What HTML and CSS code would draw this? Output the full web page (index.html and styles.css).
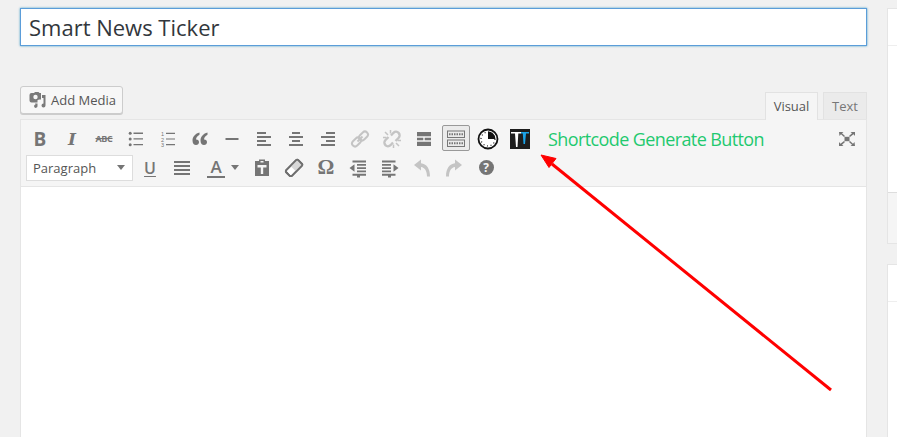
FILE: index.html
```html
<!DOCTYPE html>
<html lang="en">
<head>
    <meta charset="UTF-8">
    <meta name="viewport" content="width=device-width, initial-scale=1.0">
    <title>Edit Ticker</title>
    <link rel="stylesheet" href="styles.css">
</head>
<body>
    <div class="page">
        <div class="main">
            <input class="title-input" type="text" value="Smart News Ticker">

            <div class="editor-head">
                <button class="add-media">
                    <svg class="media-icon" viewBox="0 0 18 16"><path d="M2.500 1H5l1-1h3.500l1 1H12v6.500h-1.500a3 3 0 0 0-2 .8V10.500H2.500a2 2 0 0 1-2-2V3a2 2 0 0 1 2-2z"/><circle cx="6.500" cy="5" r="2.200" fill="#f7f7f7"/><path d="M13 3h3.500v10.500a2 2 0 1 1-2-2V6H13zM6 11.500h2.500v2.500a1.700 1.700 0 1 1-2-1.500z"/></svg>
                    Add Media
                </button>
                <div class="tabs">
                    <span class="tab tab-active">Visual</span>
                    <span class="tab">Text</span>
                </div>
            </div>

            <div class="editor">
                <div class="toolbar">
                    <div class="row">
                        <span class="tool glyph-b">B</span>
                        <span class="tool glyph-i">I</span>
                        <span class="tool glyph-abc">ABC</span>
                        <span class="tool"><svg viewBox="0 0 20 20"><circle cx="4.200" cy="4.300" r="1.500"/><circle cx="4.200" cy="10" r="1.500"/><circle cx="4.200" cy="15.700" r="1.500"/><path d="M7.500 3.600h9.500v1.300H7.500zM7.500 9.300h9.500v1.300H7.500zM7.500 15h9.500v1.300H7.500z"/></svg></span>
                        <span class="tool"><svg viewBox="0 0 20 20"><text x="3" y="7" class="tiny-num">1</text><text x="3" y="12.500" class="tiny-num">2</text><text x="3" y="17.500" class="tiny-num">3</text><path d="M8 3.800h9v1.200H8zM8 9.400h9v1.200H8zM8 15h9v1.200H8z"/></svg></span>
                        <span class="tool"><svg viewBox="0 0 20 20"><path d="M9.500 3.500C5.500 4.500 2.500 7.500 2.500 11.500c0 3 1.500 4.500 3.500 4.500 1.800 0 3-1.200 3-2.800 0-1.700-1.200-2.800-3-2.700.2-2 1.500-3.800 3.500-4.800zM17.500 3.500c-4 1-7 4-7 8 0 3 1.500 4.500 3.500 4.500 1.800 0 3-1.200 3-2.800 0-1.700-1.200-2.800-3-2.700.2-2 1.500-3.800 3.500-4.800z"/></svg></span>
                        <span class="tool"><svg viewBox="0 0 20 20"><path d="M3.500 9h13v2h-13z"/></svg></span>
                        <span class="tool"><svg viewBox="0 0 20 20"><path d="M12 5V3H3v2h9zm5 4V7H3v2h14zm-5 4v-2H3v2h9zm5 4v-2H3v2h14z"/></svg></span>
                        <span class="tool"><svg viewBox="0 0 20 20"><path d="M14 5V3H6v2h8zm3 4V7H3v2h14zm-3 4v-2H6v2h8zm3 4v-2H3v2h14z"/></svg></span>
                        <span class="tool"><svg viewBox="0 0 20 20"><path d="M17 5V3H8v2h9zm0 4V7H3v2h14zm0 4v-2H8v2h9zm0 4v-2H3v2h14z"/></svg></span>
                        <span class="tool tool-off"><svg viewBox="0 0 20 20"><g class="chain"><rect x="1.500" y="10" width="10" height="6" rx="3" transform="rotate(-45 6.500 13)"/><rect x="8.500" y="4" width="10" height="6" rx="3" transform="rotate(-45 13.500 7)"/><path d="M7.500 12.500l5-5"/></g></svg></span>
                        <span class="tool tool-off"><svg viewBox="0 0 20 20"><g class="chain chain-thick"><path d="M6.500 8l-3 3a3.400 3.400 0 0 0 5 5.200l2.500-2.700M13.500 12l3-3a3.400 3.400 0 0 0-5-5.200L9 6.500"/><path d="M3 3l3 3M17 17l-3-3M8.500 1v3.500M11.500 15.500V19M1 8.500h3.500M15.500 11.500H19" stroke-width="1.500"/></g></svg></span>
                        <span class="tool"><svg viewBox="0 0 20 20"><path d="M3 3h14v4.300H3zM3 8.800h6.300v2.400H3zM10.700 8.800H17v2.400h-6.300zM3 12.700h14V17H3z"/></svg></span>
                        <span class="tool tool-active"><svg viewBox="0 0 20 20"><g class="keys"><rect x="1.500" y="2" width="17" height="6.500"/><rect x="1.500" y="11" width="17" height="6.500"/><path d="M3 5.200h14M3 14.200h14" stroke-dasharray="1.500 1" stroke-width="2"/></g></svg></span>
                        <span class="tool"><svg class="clock" viewBox="0 0 22 22"><circle cx="11" cy="11" r="9.500"/><path class="pie" d="M11 11V3.500A7.500 7.500 0 0 1 18.500 11z"/><circle class="ticks" cx="11" cy="11" r="7"/></svg></span>
                        <span class="tool"><svg class="logo" viewBox="0 0 20 20"><path fill="#1d1d1d" d="M0 0h20v20H0z"/><path fill="#fff" d="M1 3h10v1.500H8.300L7.500 18H6L5 4.500H1z"/><path fill="#1ca3e8" d="M11 3h8v1.500h-3L15 15h-1.500l-.7-10.500H11z"/></svg></span>
                        <span class="note">Shortcode Generate Button</span>
                        <span class="tool tool-end"><svg viewBox="0 0 20 20"><path d="M7.500 7.800h5v4.400h-5z"/><path d="M2 3h4.500L5 4.300 8 7 7 8 4 5.300 2.500 7zM18 3v4l-1.500-1.700L13 8l-1-1 3-2.700L13.500 3zM2 17v-4l1.500 1.700L7 12l1 1-3 2.700L6.500 17zM18 17h-4.500l1.500-1.300L12 13l1-1 3 2.700 1.500-1.700z"/></svg></span>
                    </div>
                    <div class="row">
                        <div class="format-select">Paragraph<i class="caret"></i></div>
                        <span class="tool glyph-u">U</span>
                        <span class="tool"><svg viewBox="0 0 20 20"><path d="M2 3h16v2H2zM2 7h16v2H2zM2 11h16v2H2zM2 15h16v2H2z"/></svg></span>
                        <span class="tool tool-color"><span class="glyph-a">A</span><i class="caret"></i></span>
                        <span class="tool"><svg viewBox="0 0 20 20"><path fill-rule="evenodd" d="M7 3V1.500h6V3h4v15H3V3zM8.500 3v1.500h3V3zM5.500 7v2.500h3.300V16h2.400V9.500h3.300V7z"/></svg></span>
                        <span class="tool"><svg viewBox="0 0 20 20"><g transform="rotate(-45 10 10)"><rect x="1.500" y="6" width="17" height="8" rx="1.500" fill="#fff" stroke="#6f6f6f" stroke-width="1.800"/><path d="M9 6h9v8H9z" fill="#d8d8d8"/><rect x="1.500" y="6" width="17" height="8" rx="1.500" fill="none" stroke="#6f6f6f" stroke-width="1.800"/></g></svg></span>
                        <span class="tool glyph-omega">Ω</span>
                        <span class="tool"><svg viewBox="0 0 20 20"><path d="M4.500 2.500H18v2H4.500zM9 6h9v1.800H9zM9 9.200h9V11H9zM9 12.500h9v1.800H9zM4.500 15.700H18v2H4.500zM9 17.700h3v1.800H9zM1.500 10l5-3.800v7.600z"/></svg></span>
                        <span class="tool"><svg viewBox="0 0 20 20"><path d="M2 2.500h13.500v2H2zM2 6h9v1.800H2zM2 9.200h9V11H2zM2 12.500h9v1.800H2zM2 15.700h13.500v2H2zM8 17.700h3v1.800H8zM18.500 10l-5-3.800v7.600z"/></svg></span>
                        <span class="tool tool-off"><svg viewBox="0 0 20 20"><path d="M2 7l7-5.500v3.700c5.500.7 9 5 9 13.300h-3c0-5.500-2.300-8.800-6-9.400v3.400z"/></svg></span>
                        <span class="tool tool-off"><svg viewBox="0 0 20 20"><path d="M18 7l-7-5.500v3.700C5.500 5.900 2 10.200 2 18.500h3c0-5.500 2.300-8.800 6-9.400v3.400z"/></svg></span>
                        <span class="tool"><span class="help">?</span></span>
                    </div>
                </div>
                <div class="editor-body"></div>
            </div>
        </div>

        <div class="side">
            <div class="side-box">
                <div class="side-head"></div>
                <div class="side-body"></div>
                <div class="side-foot"></div>
            </div>
            <div class="side-box">
                <div class="side-head"></div>
                <div class="side-body"></div>
            </div>
        </div>
    </div>

    <!-- red callout drawn on top of the screenshot -->
    <svg class="callout" viewBox="0 0 897 437">
        <path d="M831 390L552 164" stroke="#f00" stroke-width="3" fill="none"/>
        <path d="M541 155L556 158.500 549 167.500z" fill="#f00" stroke="#f00" stroke-width="1"/>
    </svg>
</body>
</html>
```

FILE: styles.css
```css
html, body {
    height: 100%;
    overflow: hidden;
}
body {
    margin: 0;
    background: #f1f1f1;
    color: #444;
    font-family: 'Open Sans', sans-serif;
    font-size: 13px;
}
.page {
    display: flex;
    gap: 20px;
    box-sizing: border-box;
    height: 100vh;
    overflow: hidden;
    padding: 8px 0 0 20px;
}
.main {
    width: 847px;
    flex: none;
}
.title-input {
    display: block;
    box-sizing: border-box;
    width: 100%;
    height: 38px;
    padding: 3px 8px;
    border: 1px solid #5b9dd9;
    box-shadow: 0 0 2px rgba(30, 140, 190, 0.8);
    background: #fff;
    color: #32373c;
    font-family: 'Open Sans', sans-serif;
    font-size: 22px;
    outline: none;
}

.editor-head {
    display: flex;
    justify-content: space-between;
    align-items: flex-start;
    margin-top: 40px;
    height: 33px;
}
.add-media {
    display: flex;
    align-items: center;
    gap: 4px;
    box-sizing: border-box;
    height: 28px;
    width: 103px;
    padding: 0 8px;
    border: 1px solid #ccc;
    border-radius: 3px;
    background: #f7f7f7;
    box-shadow: 0 1px 0 #ccc;
    color: #555;
    font-family: 'Open Sans', sans-serif;
    font-size: 13px;
    white-space: nowrap;
}
.media-icon {
    width: 18px;
    height: 16px;
    fill: #7a7a7a;
    flex: none;
}
.tabs {
    display: flex;
    align-items: flex-end;
    gap: 5px;
    align-self: flex-end;
    position: relative;
    z-index: 1;
}
.tab {
    box-sizing: border-box;
    height: 27px;
    width: 44px;
    border: 1px solid #e2e2e2;
    border-bottom: 0;
    background: #ebebeb;
    color: #777;
    line-height: 26px;
    text-align: center;
}
.tab-active {
    width: 53px;
    height: 28px;
    margin-bottom: -1px;
    background: #f5f5f5;
    color: #555;
}

.editor {
    border: 1px solid #e5e5e5;
    background: #fff;
}
.toolbar {
    height: 58px;
    padding: 4px 3px;
    border-bottom: 1px solid #e5e5e5;
    background: #f5f5f5;
}
.row {
    display: flex;
    align-items: center;
    height: 29px;
}
.tool {
    display: flex;
    align-items: center;
    justify-content: center;
    flex: none;
    width: 32px;
    height: 29px;
    color: #757575;
}
.tool svg {
    width: 20px;
    height: 20px;
    fill: #757575;
}
.tool-off svg {
    fill: #c4c4c4;
}
.tool-active {
    position: relative;
    z-index: 0;
}
.tool-active::before {
    content: "";
    position: absolute;
    z-index: -1;
    left: 2px;
    top: 1px;
    width: 28px;
    height: 26px;
    border: 1px solid #999;
    border-radius: 2px;
    background: #ebebeb;
    box-sizing: border-box;
}
.tool-end {
    margin-left: auto;
}
.glyph-b {
    font-size: 19px;
    font-weight: 700;
}
.glyph-i {
    font-family: 'DejaVu Serif', serif;
    font-size: 17px;
    font-weight: 700;
    font-style: italic;
}
.glyph-abc {
    font-size: 9px;
    font-weight: 700;
    text-decoration: line-through;
    letter-spacing: -0.3px;
}
.glyph-u {
    font-size: 16px;
    font-weight: 600;
    text-decoration: underline;
    text-underline-offset: 2px;
}
.glyph-a {
    border-bottom: 2px solid #757575;
    padding: 0 3px;
    font-size: 17px;
    font-weight: 600;
    line-height: 19px;
}
.glyph-omega {
    font-family: 'Liberation Serif', serif;
    font-size: 21px;
    font-weight: 700;
}
.tiny-num {
    font-size: 5.500px;
    font-family: 'Liberation Sans', sans-serif;
}
.chain {
    fill: none;
    stroke: #c4c4c4;
    stroke-width: 2;
}
.chain-thick {
    stroke-width: 2.400;
}
.keys {
    fill: none;
    stroke: #777;
    stroke-width: 1;
}
.tool .clock {
    width: 22px;
    height: 22px;
    fill: #fff;
    stroke: #111;
    stroke-width: 1.800;
}
.clock .pie {
    fill: #111;
    stroke: none;
}
.clock .ticks {
    fill: none;
    stroke-width: 1.200;
    stroke-dasharray: 1 2.660;
}
.note {
    margin-left: 12px;
    color: #1fc96f;
    font-size: 18px;
    letter-spacing: -0.6px;
    white-space: nowrap;
}
.format-select {
    display: flex;
    align-items: center;
    justify-content: space-between;
    box-sizing: border-box;
    flex: none;
    width: 107px;
    height: 26px;
    margin: 0 1px 0 2px;
    padding: 0 7px 0 6px;
    border: 1px solid #ddd;
    background: #fff;
    color: #555;
}
.caret {
    width: 0;
    height: 0;
    border-left: 4px solid transparent;
    border-right: 4px solid transparent;
    border-top: 5px solid #757575;
}
.tool-color {
    width: 48px;
    gap: 6px;
    padding-left: 2px;
    box-sizing: border-box;
}
.help {
    width: 15px;
    height: 15px;
    border-radius: 50%;
    background: #757575;
    color: #f5f5f5;
    font-size: 12px;
    font-weight: 700;
    line-height: 15px;
    text-align: center;
}
.editor-body {
    height: 300px;
}

.side {
    width: 280px;
    flex: none;
}
.side-box {
    margin-bottom: 20px;
    border: 1px solid #e5e5e5;
    background: #fff;
}
.side-head {
    height: 36px;
    border-bottom: 1px solid #eee;
}
.side-body {
    height: 146px;
}
.side-foot {
    height: 50px;
    border-top: 1px solid #ddd;
    background: #f5f5f5;
}

.callout {
    position: absolute;
    left: 0;
    top: 0;
    width: 897px;
    height: 437px;
    pointer-events: none;
}
```
